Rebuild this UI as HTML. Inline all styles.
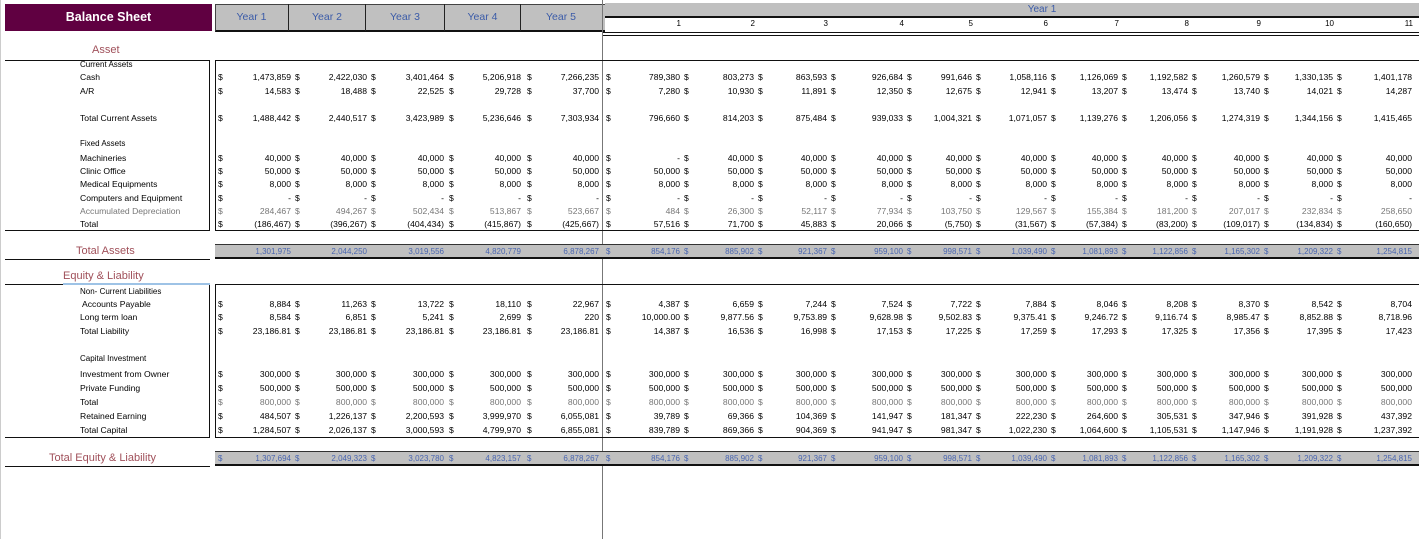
<!DOCTYPE html>
<html><head><meta charset="utf-8"><style>
*{margin:0;padding:0;box-sizing:border-box}
body{width:1419px;height:539px;background:#fff;position:relative;overflow:hidden;font-family:"Liberation Sans",sans-serif;font-size:8.6px;color:#000}
.a{position:absolute}
.r{position:absolute;left:0;width:1419px;height:12px;line-height:12px}
.c{position:absolute;top:0;height:12px;display:flex;justify-content:space-between;white-space:nowrap}
.c i{font-style:normal}
.c0{left:218px;width:73px}.c1{left:295px;width:72px}.c2{left:371px;width:73px}.c3{left:449px;width:72px}.c4{left:527px;width:72px}
.c5{left:606px;width:74px}.c6{left:684px;width:70px}.c7{left:758px;width:69px}.c8{left:831px;width:72px}.c9{left:907px;width:65px}
.c10{left:976px;width:71px}.c11{left:1051px;width:67px}.c12{left:1122px;width:66px}.c13{left:1192px;width:68px}.c14{left:1264px;width:69px}.c15{left:1337px;width:75px}
.l{position:absolute;left:80px;top:0;white-space:nowrap}
.g{color:#777}
.t{color:#a0505a;font-size:11px;position:absolute;white-space:nowrap}
.bl{color:#4a66b0;font-size:8px}
.yh{position:absolute;top:4px;height:27px;line-height:27px;text-align:center;color:#3b5ba8;font-size:10.5px;border-right:1px solid #222}
.hn{position:absolute;top:19px;font-size:8px;text-align:right}
</style></head><body>
<div class="a" style="left:5px;top:4px;width:207px;height:27px;background:#600041;color:#fff;font-weight:bold;font-size:12.5px;line-height:27px;text-align:center">Balance Sheet</div>
<div class="a" style="left:215px;top:4px;width:390px;height:28px;background:#c0c0c0;border-top:1px solid #444;border-bottom:2px solid #111;border-left:1px solid #444"></div>
<div class="yh" style="left:215px;width:74px">Year 1</div>
<div class="yh" style="left:289px;width:77px">Year 2</div>
<div class="yh" style="left:366px;width:79px">Year 3</div>
<div class="yh" style="left:445px;width:76px">Year 4</div>
<div class="yh" style="left:521px;width:80px;border-right:none">Year 5</div>
<div class="a" style="left:605px;top:3px;width:814px;height:15px;background:#c0c0c0;border-bottom:2px solid #111;color:#3b5ba8;font-size:10px;line-height:13px;text-align:center;padding-left:60px">Year 1</div>
<div class="a" style="left:603px;top:32px;width:816px;height:4px;border-top:1px solid #111;border-bottom:1px solid #111"></div>
<div class="a" style="left:602px;top:0;width:1px;height:539px;background:#777"></div>
<div class="a" style="left:0;top:0;width:1px;height:539px;background:#ccc"></div>
<div class="hn" style="left:661px;width:20px">1</div><div class="hn" style="left:735px;width:20px">2</div><div class="hn" style="left:808px;width:20px">3</div><div class="hn" style="left:884px;width:20px">4</div><div class="hn" style="left:953px;width:20px">5</div><div class="hn" style="left:1028px;width:20px">6</div><div class="hn" style="left:1099px;width:20px">7</div><div class="hn" style="left:1169px;width:20px">8</div><div class="hn" style="left:1241px;width:20px">9</div><div class="hn" style="left:1314px;width:20px">10</div><div class="hn" style="left:1393px;width:20px">11</div>

<div class="a" style="left:5px;top:60px;width:205px;height:171px;border-top:1px solid #111;border-right:1px solid #111;border-bottom:1px solid #111"></div>
<div class="a" style="left:215px;top:60px;width:1204px;height:171px;border-top:1px solid #111;border-left:1px solid #111;border-bottom:1px solid #111"></div>
<div class="a" style="left:215px;top:244px;width:1204px;height:15px;background:#c0c0c0;border-top:1px solid #333;border-bottom:2px solid #111"></div>
<div class="a" style="left:5px;top:259px;width:205px;height:1px;background:#111"></div>
<div class="a" style="left:5px;top:284px;width:58px;height:1px;background:#111"></div>
<div class="a" style="left:63px;top:283px;width:147px;height:2px;background:#9ec3e6"></div>
<div class="a" style="left:5px;top:285px;width:205px;height:153px;border-right:1px solid #111;border-bottom:1px solid #111"></div>
<div class="a" style="left:215px;top:284px;width:1204px;height:154px;border-top:1px solid #111;border-left:1px solid #111;border-bottom:1px solid #111"></div>
<div class="a" style="left:215px;top:451px;width:1204px;height:15px;background:#c0c0c0;border-top:1px solid #333;border-bottom:2px solid #111"></div>
<div class="a" style="left:5px;top:466px;width:205px;height:1px;background:#111"></div>

<div class="t" style="left:92px;top:44px">Asset</div>
<div class="t" style="left:76px;top:245px">Total Assets</div>
<div class="t" style="left:63px;top:270px">Equity &amp; Liability</div>
<div class="t" style="left:49px;top:452px">Total Equity &amp; Liability</div>

<div class="r" style="top:59px"><span class="l" style="font-size:8px">Current Assets</span></div>
<div class="r" style="top:71px"><span class="l">Cash</span>
<p class="c c0"><i>$</i><i>1,473,859</i></p><p class="c c1"><i>$</i><i>2,422,030</i></p><p class="c c2"><i>$</i><i>3,401,464</i></p><p class="c c3"><i>$</i><i>5,206,918</i></p><p class="c c4"><i>$</i><i>7,266,235</i></p><p class="c c5"><i>$</i><i>789,380</i></p><p class="c c6"><i>$</i><i>803,273</i></p><p class="c c7"><i>$</i><i>863,593</i></p><p class="c c8"><i>$</i><i>926,684</i></p><p class="c c9"><i>$</i><i>991,646</i></p><p class="c c10"><i>$</i><i>1,058,116</i></p><p class="c c11"><i>$</i><i>1,126,069</i></p><p class="c c12"><i>$</i><i>1,192,582</i></p><p class="c c13"><i>$</i><i>1,260,579</i></p><p class="c c14"><i>$</i><i>1,330,135</i></p><p class="c c15"><i>$</i><i>1,401,178</i></p></div>
<div class="r" style="top:85px"><span class="l">A/R</span>
<p class="c c0"><i>$</i><i>14,583</i></p><p class="c c1"><i>$</i><i>18,488</i></p><p class="c c2"><i>$</i><i>22,525</i></p><p class="c c3"><i>$</i><i>29,728</i></p><p class="c c4"><i>$</i><i>37,700</i></p><p class="c c5"><i>$</i><i>7,280</i></p><p class="c c6"><i>$</i><i>10,930</i></p><p class="c c7"><i>$</i><i>11,891</i></p><p class="c c8"><i>$</i><i>12,350</i></p><p class="c c9"><i>$</i><i>12,675</i></p><p class="c c10"><i>$</i><i>12,941</i></p><p class="c c11"><i>$</i><i>13,207</i></p><p class="c c12"><i>$</i><i>13,474</i></p><p class="c c13"><i>$</i><i>13,740</i></p><p class="c c14"><i>$</i><i>14,021</i></p><p class="c c15"><i>$</i><i>14,287</i></p></div>
<div class="r" style="top:112px"><span class="l">Total Current Assets</span>
<p class="c c0"><i>$</i><i>1,488,442</i></p><p class="c c1"><i>$</i><i>2,440,517</i></p><p class="c c2"><i>$</i><i>3,423,989</i></p><p class="c c3"><i>$</i><i>5,236,646</i></p><p class="c c4"><i>$</i><i>7,303,934</i></p><p class="c c5"><i>$</i><i>796,660</i></p><p class="c c6"><i>$</i><i>814,203</i></p><p class="c c7"><i>$</i><i>875,484</i></p><p class="c c8"><i>$</i><i>939,033</i></p><p class="c c9"><i>$</i><i>1,004,321</i></p><p class="c c10"><i>$</i><i>1,071,057</i></p><p class="c c11"><i>$</i><i>1,139,276</i></p><p class="c c12"><i>$</i><i>1,206,056</i></p><p class="c c13"><i>$</i><i>1,274,319</i></p><p class="c c14"><i>$</i><i>1,344,156</i></p><p class="c c15"><i>$</i><i>1,415,465</i></p></div>

<div class="r" style="top:138px"><span class="l" style="font-size:8px">Fixed Assets</span></div>
<div class="r" style="top:152px"><span class="l">Machineries</span>
<p class="c c0"><i>$</i><i>40,000</i></p><p class="c c1"><i>$</i><i>40,000</i></p><p class="c c2"><i>$</i><i>40,000</i></p><p class="c c3"><i>$</i><i>40,000</i></p><p class="c c4"><i>$</i><i>40,000</i></p><p class="c c5"><i>$</i><i>-</i></p><p class="c c6"><i>$</i><i>40,000</i></p><p class="c c7"><i>$</i><i>40,000</i></p><p class="c c8"><i>$</i><i>40,000</i></p><p class="c c9"><i>$</i><i>40,000</i></p><p class="c c10"><i>$</i><i>40,000</i></p><p class="c c11"><i>$</i><i>40,000</i></p><p class="c c12"><i>$</i><i>40,000</i></p><p class="c c13"><i>$</i><i>40,000</i></p><p class="c c14"><i>$</i><i>40,000</i></p><p class="c c15"><i>$</i><i>40,000</i></p></div>
<div class="r" style="top:165px"><span class="l">Clinic Office</span>
<p class="c c0"><i>$</i><i>50,000</i></p><p class="c c1"><i>$</i><i>50,000</i></p><p class="c c2"><i>$</i><i>50,000</i></p><p class="c c3"><i>$</i><i>50,000</i></p><p class="c c4"><i>$</i><i>50,000</i></p><p class="c c5"><i>$</i><i>50,000</i></p><p class="c c6"><i>$</i><i>50,000</i></p><p class="c c7"><i>$</i><i>50,000</i></p><p class="c c8"><i>$</i><i>50,000</i></p><p class="c c9"><i>$</i><i>50,000</i></p><p class="c c10"><i>$</i><i>50,000</i></p><p class="c c11"><i>$</i><i>50,000</i></p><p class="c c12"><i>$</i><i>50,000</i></p><p class="c c13"><i>$</i><i>50,000</i></p><p class="c c14"><i>$</i><i>50,000</i></p><p class="c c15"><i>$</i><i>50,000</i></p></div>
<div class="r" style="top:178px"><span class="l">Medical Equipments</span>
<p class="c c0"><i>$</i><i>8,000</i></p><p class="c c1"><i>$</i><i>8,000</i></p><p class="c c2"><i>$</i><i>8,000</i></p><p class="c c3"><i>$</i><i>8,000</i></p><p class="c c4"><i>$</i><i>8,000</i></p><p class="c c5"><i>$</i><i>8,000</i></p><p class="c c6"><i>$</i><i>8,000</i></p><p class="c c7"><i>$</i><i>8,000</i></p><p class="c c8"><i>$</i><i>8,000</i></p><p class="c c9"><i>$</i><i>8,000</i></p><p class="c c10"><i>$</i><i>8,000</i></p><p class="c c11"><i>$</i><i>8,000</i></p><p class="c c12"><i>$</i><i>8,000</i></p><p class="c c13"><i>$</i><i>8,000</i></p><p class="c c14"><i>$</i><i>8,000</i></p><p class="c c15"><i>$</i><i>8,000</i></p></div>
<div class="r" style="top:192px"><span class="l">Computers and Equipment</span>
<p class="c c0"><i>$</i><i>-</i></p><p class="c c1"><i>$</i><i>-</i></p><p class="c c2"><i>$</i><i>-</i></p><p class="c c3"><i>$</i><i>-</i></p><p class="c c4"><i>$</i><i>-</i></p><p class="c c5"><i>$</i><i>-</i></p><p class="c c6"><i>$</i><i>-</i></p><p class="c c7"><i>$</i><i>-</i></p><p class="c c8"><i>$</i><i>-</i></p><p class="c c9"><i>$</i><i>-</i></p><p class="c c10"><i>$</i><i>-</i></p><p class="c c11"><i>$</i><i>-</i></p><p class="c c12"><i>$</i><i>-</i></p><p class="c c13"><i>$</i><i>-</i></p><p class="c c14"><i>$</i><i>-</i></p><p class="c c15"><i>$</i><i>-</i></p></div>
<div class="r g" style="top:205px"><span class="l">Accumulated Depreciation</span>
<p class="c c0"><i>$</i><i>284,467</i></p><p class="c c1"><i>$</i><i>494,267</i></p><p class="c c2"><i>$</i><i>502,434</i></p><p class="c c3"><i>$</i><i>513,867</i></p><p class="c c4"><i>$</i><i>523,667</i></p><p class="c c5"><i>$</i><i>484</i></p><p class="c c6"><i>$</i><i>26,300</i></p><p class="c c7"><i>$</i><i>52,117</i></p><p class="c c8"><i>$</i><i>77,934</i></p><p class="c c9"><i>$</i><i>103,750</i></p><p class="c c10"><i>$</i><i>129,567</i></p><p class="c c11"><i>$</i><i>155,384</i></p><p class="c c12"><i>$</i><i>181,200</i></p><p class="c c13"><i>$</i><i>207,017</i></p><p class="c c14"><i>$</i><i>232,834</i></p><p class="c c15"><i>$</i><i>258,650</i></p></div>
<div class="r" style="top:218px"><span class="l">Total</span>
<p class="c c0"><i>$</i><i>(186,467)</i></p><p class="c c1"><i>$</i><i>(396,267)</i></p><p class="c c2"><i>$</i><i>(404,434)</i></p><p class="c c3"><i>$</i><i>(415,867)</i></p><p class="c c4"><i>$</i><i>(425,667)</i></p><p class="c c5"><i>$</i><i>57,516</i></p><p class="c c6"><i>$</i><i>71,700</i></p><p class="c c7"><i>$</i><i>45,883</i></p><p class="c c8"><i>$</i><i>20,066</i></p><p class="c c9"><i>$</i><i>(5,750)</i></p><p class="c c10"><i>$</i><i>(31,567)</i></p><p class="c c11"><i>$</i><i>(57,384)</i></p><p class="c c12"><i>$</i><i>(83,200)</i></p><p class="c c13"><i>$</i><i>(109,017)</i></p><p class="c c14"><i>$</i><i>(134,834)</i></p><p class="c c15"><i>$</i><i>(160,650)</i></p></div>

<div class="r bl" style="top:246px">
<p class="c c0"><i></i><i>1,301,975</i></p><p class="c c1"><i></i><i>2,044,250</i></p><p class="c c2"><i></i><i>3,019,556</i></p><p class="c c3"><i></i><i>4,820,779</i></p><p class="c c4"><i></i><i>6,878,267</i></p><p class="c c5"><i>$</i><i>854,176</i></p><p class="c c6"><i>$</i><i>885,902</i></p><p class="c c7"><i>$</i><i>921,367</i></p><p class="c c8"><i>$</i><i>959,100</i></p><p class="c c9"><i>$</i><i>998,571</i></p><p class="c c10"><i>$</i><i>1,039,490</i></p><p class="c c11"><i>$</i><i>1,081,893</i></p><p class="c c12"><i>$</i><i>1,122,856</i></p><p class="c c13"><i>$</i><i>1,165,302</i></p><p class="c c14"><i>$</i><i>1,209,322</i></p><p class="c c15"><i>$</i><i>1,254,815</i></p></div>

<div class="r" style="top:286px"><span class="l" style="font-size:8px">Non- Current Liabilities</span></div>
<div class="r" style="top:298px"><span class="l" style="left:82px">Accounts Payable</span>
<p class="c c0"><i>$</i><i>8,884</i></p><p class="c c1"><i>$</i><i>11,263</i></p><p class="c c2"><i>$</i><i>13,722</i></p><p class="c c3"><i>$</i><i>18,110</i></p><p class="c c4"><i>$</i><i>22,967</i></p><p class="c c5"><i>$</i><i>4,387</i></p><p class="c c6"><i>$</i><i>6,659</i></p><p class="c c7"><i>$</i><i>7,244</i></p><p class="c c8"><i>$</i><i>7,524</i></p><p class="c c9"><i>$</i><i>7,722</i></p><p class="c c10"><i>$</i><i>7,884</i></p><p class="c c11"><i>$</i><i>8,046</i></p><p class="c c12"><i>$</i><i>8,208</i></p><p class="c c13"><i>$</i><i>8,370</i></p><p class="c c14"><i>$</i><i>8,542</i></p><p class="c c15"><i>$</i><i>8,704</i></p></div>
<div class="r" style="top:311px"><span class="l">Long term loan</span>
<p class="c c0"><i>$</i><i>8,584</i></p><p class="c c1"><i>$</i><i>6,851</i></p><p class="c c2"><i>$</i><i>5,241</i></p><p class="c c3"><i>$</i><i>2,699</i></p><p class="c c4"><i>$</i><i>220</i></p><p class="c c5"><i>$</i><i>10,000.00</i></p><p class="c c6"><i>$</i><i>9,877.56</i></p><p class="c c7"><i>$</i><i>9,753.89</i></p><p class="c c8"><i>$</i><i>9,628.98</i></p><p class="c c9"><i>$</i><i>9,502.83</i></p><p class="c c10"><i>$</i><i>9,375.41</i></p><p class="c c11"><i>$</i><i>9,246.72</i></p><p class="c c12"><i>$</i><i>9,116.74</i></p><p class="c c13"><i>$</i><i>8,985.47</i></p><p class="c c14"><i>$</i><i>8,852.88</i></p><p class="c c15"><i>$</i><i>8,718.96</i></p></div>
<div class="r" style="top:325px"><span class="l">Total Liability</span>
<p class="c c0"><i>$</i><i>23,186.81</i></p><p class="c c1"><i>$</i><i>23,186.81</i></p><p class="c c2"><i>$</i><i>23,186.81</i></p><p class="c c3"><i>$</i><i>23,186.81</i></p><p class="c c4"><i>$</i><i>23,186.81</i></p><p class="c c5"><i>$</i><i>14,387</i></p><p class="c c6"><i>$</i><i>16,536</i></p><p class="c c7"><i>$</i><i>16,998</i></p><p class="c c8"><i>$</i><i>17,153</i></p><p class="c c9"><i>$</i><i>17,225</i></p><p class="c c10"><i>$</i><i>17,259</i></p><p class="c c11"><i>$</i><i>17,293</i></p><p class="c c12"><i>$</i><i>17,325</i></p><p class="c c13"><i>$</i><i>17,356</i></p><p class="c c14"><i>$</i><i>17,395</i></p><p class="c c15"><i>$</i><i>17,423</i></p></div>

<div class="r" style="top:353px"><span class="l" style="font-size:8px">Capital Investment</span></div>
<div class="r" style="top:368px"><span class="l">Investment from Owner</span>
<p class="c c0"><i>$</i><i>300,000</i></p><p class="c c1"><i>$</i><i>300,000</i></p><p class="c c2"><i>$</i><i>300,000</i></p><p class="c c3"><i>$</i><i>300,000</i></p><p class="c c4"><i>$</i><i>300,000</i></p><p class="c c5"><i>$</i><i>300,000</i></p><p class="c c6"><i>$</i><i>300,000</i></p><p class="c c7"><i>$</i><i>300,000</i></p><p class="c c8"><i>$</i><i>300,000</i></p><p class="c c9"><i>$</i><i>300,000</i></p><p class="c c10"><i>$</i><i>300,000</i></p><p class="c c11"><i>$</i><i>300,000</i></p><p class="c c12"><i>$</i><i>300,000</i></p><p class="c c13"><i>$</i><i>300,000</i></p><p class="c c14"><i>$</i><i>300,000</i></p><p class="c c15"><i>$</i><i>300,000</i></p></div>
<div class="r" style="top:382px"><span class="l">Private Funding</span>
<p class="c c0"><i>$</i><i>500,000</i></p><p class="c c1"><i>$</i><i>500,000</i></p><p class="c c2"><i>$</i><i>500,000</i></p><p class="c c3"><i>$</i><i>500,000</i></p><p class="c c4"><i>$</i><i>500,000</i></p><p class="c c5"><i>$</i><i>500,000</i></p><p class="c c6"><i>$</i><i>500,000</i></p><p class="c c7"><i>$</i><i>500,000</i></p><p class="c c8"><i>$</i><i>500,000</i></p><p class="c c9"><i>$</i><i>500,000</i></p><p class="c c10"><i>$</i><i>500,000</i></p><p class="c c11"><i>$</i><i>500,000</i></p><p class="c c12"><i>$</i><i>500,000</i></p><p class="c c13"><i>$</i><i>500,000</i></p><p class="c c14"><i>$</i><i>500,000</i></p><p class="c c15"><i>$</i><i>500,000</i></p></div>
<div class="r" style="top:396px"><span class="l">Total</span>
<p class="c c0 g"><i>$</i><i>800,000</i></p><p class="c c1 g"><i>$</i><i>800,000</i></p><p class="c c2 g"><i>$</i><i>800,000</i></p><p class="c c3 g"><i>$</i><i>800,000</i></p><p class="c c4 g"><i>$</i><i>800,000</i></p><p class="c c5 g"><i>$</i><i>800,000</i></p><p class="c c6 g"><i>$</i><i>800,000</i></p><p class="c c7 g"><i>$</i><i>800,000</i></p><p class="c c8 g"><i>$</i><i>800,000</i></p><p class="c c9 g"><i>$</i><i>800,000</i></p><p class="c c10 g"><i>$</i><i>800,000</i></p><p class="c c11 g"><i>$</i><i>800,000</i></p><p class="c c12 g"><i>$</i><i>800,000</i></p><p class="c c13 g"><i>$</i><i>800,000</i></p><p class="c c14 g"><i>$</i><i>800,000</i></p><p class="c c15 g"><i>$</i><i>800,000</i></p></div>
<div class="r" style="top:410px"><span class="l">Retained Earning</span>
<p class="c c0"><i>$</i><i>484,507</i></p><p class="c c1"><i>$</i><i>1,226,137</i></p><p class="c c2"><i>$</i><i>2,200,593</i></p><p class="c c3"><i>$</i><i>3,999,970</i></p><p class="c c4"><i>$</i><i>6,055,081</i></p><p class="c c5"><i>$</i><i>39,789</i></p><p class="c c6"><i>$</i><i>69,366</i></p><p class="c c7"><i>$</i><i>104,369</i></p><p class="c c8"><i>$</i><i>141,947</i></p><p class="c c9"><i>$</i><i>181,347</i></p><p class="c c10"><i>$</i><i>222,230</i></p><p class="c c11"><i>$</i><i>264,600</i></p><p class="c c12"><i>$</i><i>305,531</i></p><p class="c c13"><i>$</i><i>347,946</i></p><p class="c c14"><i>$</i><i>391,928</i></p><p class="c c15"><i>$</i><i>437,392</i></p></div>
<div class="r" style="top:424px"><span class="l">Total Capital</span>
<p class="c c0"><i>$</i><i>1,284,507</i></p><p class="c c1"><i>$</i><i>2,026,137</i></p><p class="c c2"><i>$</i><i>3,000,593</i></p><p class="c c3"><i>$</i><i>4,799,970</i></p><p class="c c4"><i>$</i><i>6,855,081</i></p><p class="c c5"><i>$</i><i>839,789</i></p><p class="c c6"><i>$</i><i>869,366</i></p><p class="c c7"><i>$</i><i>904,369</i></p><p class="c c8"><i>$</i><i>941,947</i></p><p class="c c9"><i>$</i><i>981,347</i></p><p class="c c10"><i>$</i><i>1,022,230</i></p><p class="c c11"><i>$</i><i>1,064,600</i></p><p class="c c12"><i>$</i><i>1,105,531</i></p><p class="c c13"><i>$</i><i>1,147,946</i></p><p class="c c14"><i>$</i><i>1,191,928</i></p><p class="c c15"><i>$</i><i>1,237,392</i></p></div>

<div class="r bl" style="top:453px">
<p class="c c0"><i>$</i><i>1,307,694</i></p><p class="c c1"><i>$</i><i>2,049,323</i></p><p class="c c2"><i>$</i><i>3,023,780</i></p><p class="c c3"><i>$</i><i>4,823,157</i></p><p class="c c4"><i>$</i><i>6,878,267</i></p><p class="c c5"><i>$</i><i>854,176</i></p><p class="c c6"><i>$</i><i>885,902</i></p><p class="c c7"><i>$</i><i>921,367</i></p><p class="c c8"><i>$</i><i>959,100</i></p><p class="c c9"><i>$</i><i>998,571</i></p><p class="c c10"><i>$</i><i>1,039,490</i></p><p class="c c11"><i>$</i><i>1,081,893</i></p><p class="c c12"><i>$</i><i>1,122,856</i></p><p class="c c13"><i>$</i><i>1,165,302</i></p><p class="c c14"><i>$</i><i>1,209,322</i></p><p class="c c15"><i>$</i><i>1,254,815</i></p></div>
</body></html>
